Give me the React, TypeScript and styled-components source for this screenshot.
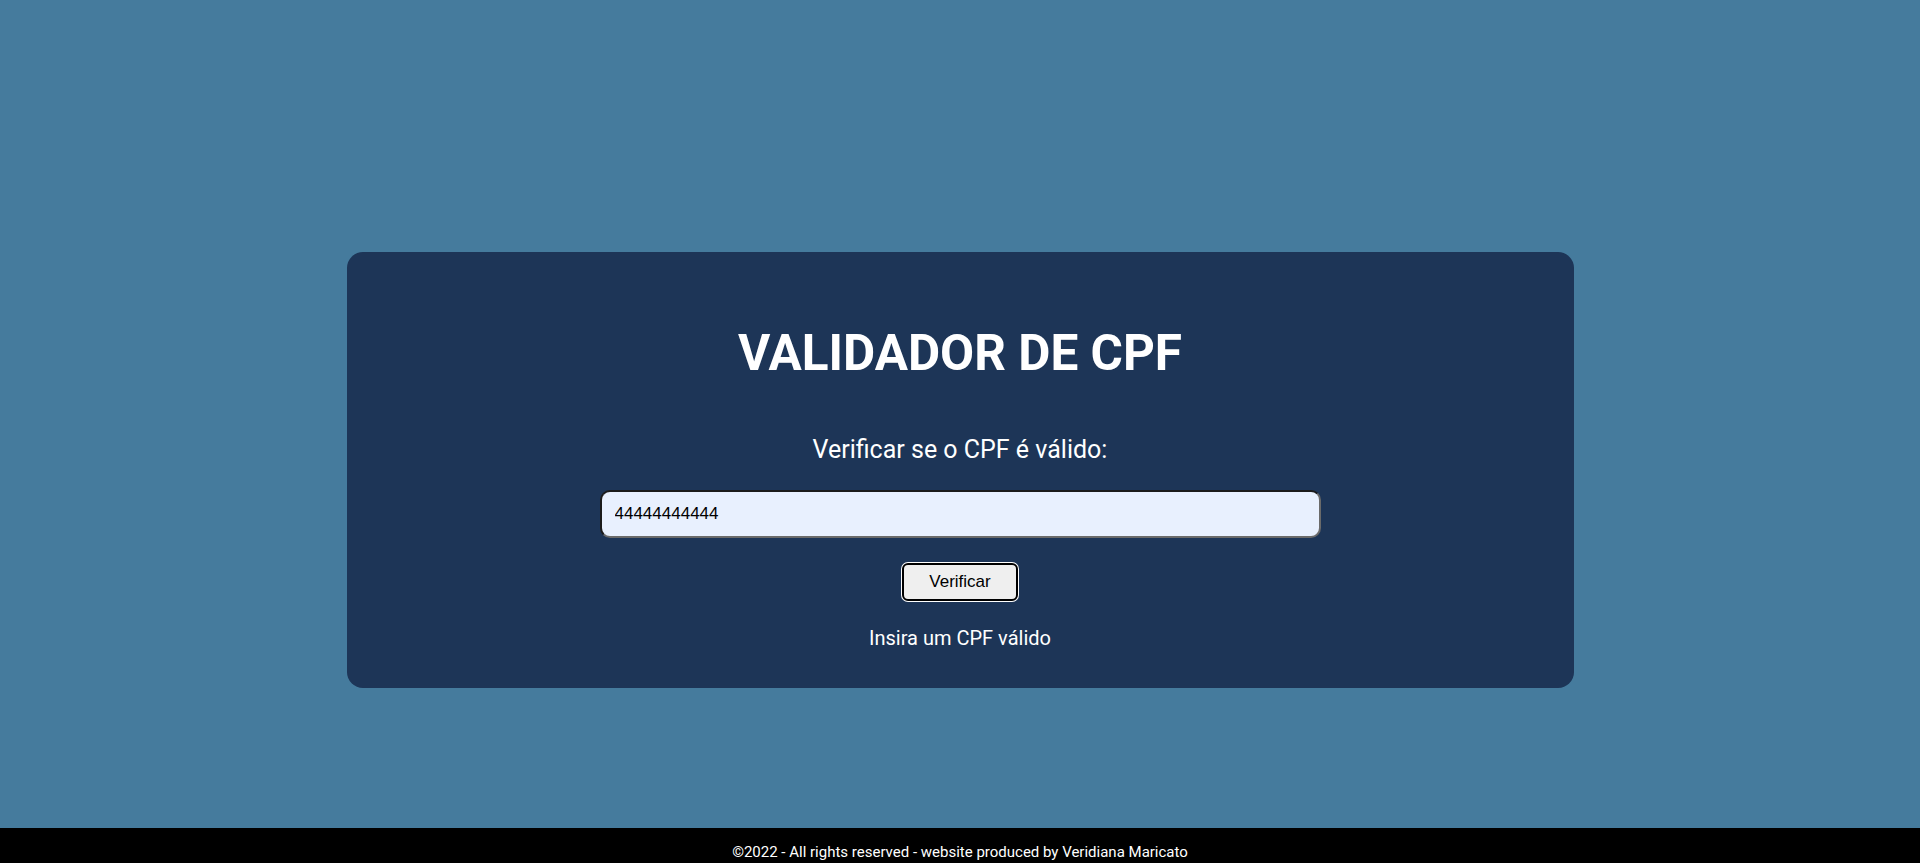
import React, { useState } from "react";
import styled, { createGlobalStyle } from "styled-components";

const GlobalStyle = createGlobalStyle`
  html, body {
    margin: 0;
    padding: 0;
    background: #457b9d;
    font-family: Roboto, "Liberation Sans", Arial, sans-serif;
  }
  * { box-sizing: border-box; }
`;

const Main = styled.main`
  display: flex;
  justify-content: center;
  padding: 252px 0 140px;
  background: #457b9d;
`;

const Card = styled.section`
  width: 1227px;
  height: 436px;
  background: #1d3557;
  border-radius: 16px;
  display: flex;
  flex-direction: column;
  align-items: center;
  padding-top: 72px;
`;

const Title = styled.h1`
  margin: 0;
  font-family: Roboto, "Liberation Sans", sans-serif;
  font-weight: 700;
  font-size: 49.5px;
  line-height: 59px;
  color: #ffffff;
`;

const Subtitle = styled.p`
  margin: 52px 0 0;
  font-family: Roboto, "Liberation Sans", sans-serif;
  font-size: 25px;
  line-height: 29px;
  color: #ffffff;
`;

const Input = styled.input`
  margin-top: 26px;
  width: 721px;
  height: 48px;
  padding: 0 13px;
  border-radius: 10px;
  border-width: 2px;
  border-style: solid;
  border-color: #1b1b1b #6a6a6a #6a6a6a #1b1b1b;
  background: #e8f0fe;
  font-family: "Liberation Sans", Arial, sans-serif;
  font-size: 17px;
  color: #000;
  outline: none;
`;

const Button = styled.button`
  margin-top: 25px;
  width: 116px;
  height: 38px;
  border: 2px solid #000;
  border-radius: 6px;
  box-shadow: 0 0 0 1px #ffffff;
  background: #efefef;
  font-family: "Liberation Sans", Arial, sans-serif;
  font-size: 17px;
  color: #000;
  cursor: pointer;
`;

const Message = styled.p`
  margin: 26px 0 0;
  font-family: Roboto, "Liberation Sans", sans-serif;
  font-size: 20px;
  line-height: 23px;
  color: #ffffff;
`;

const Footer = styled.footer`
  background: #000;
  color: #ffffff;
  text-align: center;
  padding: 15px 0;
  font-family: Roboto, "Liberation Sans", sans-serif;
  font-size: 15px;
  line-height: 18px;
`;

export default function App() {
  const [cpf, setCpf] = useState("44444444444");
  return (
    <>
      <GlobalStyle />
      <Main>
        <Card>
          <Title>VALIDADOR DE CPF</Title>
          <Subtitle>Verificar se o CPF é válido:</Subtitle>
          <Input value={cpf} onChange={(e) => setCpf(e.target.value)} />
          <Button type="button">Verificar</Button>
          <Message>Insira um CPF válido</Message>
        </Card>
      </Main>
      <Footer>©2022 - All rights reserved - website produced by Veridiana Maricato</Footer>
    </>
  );
}
